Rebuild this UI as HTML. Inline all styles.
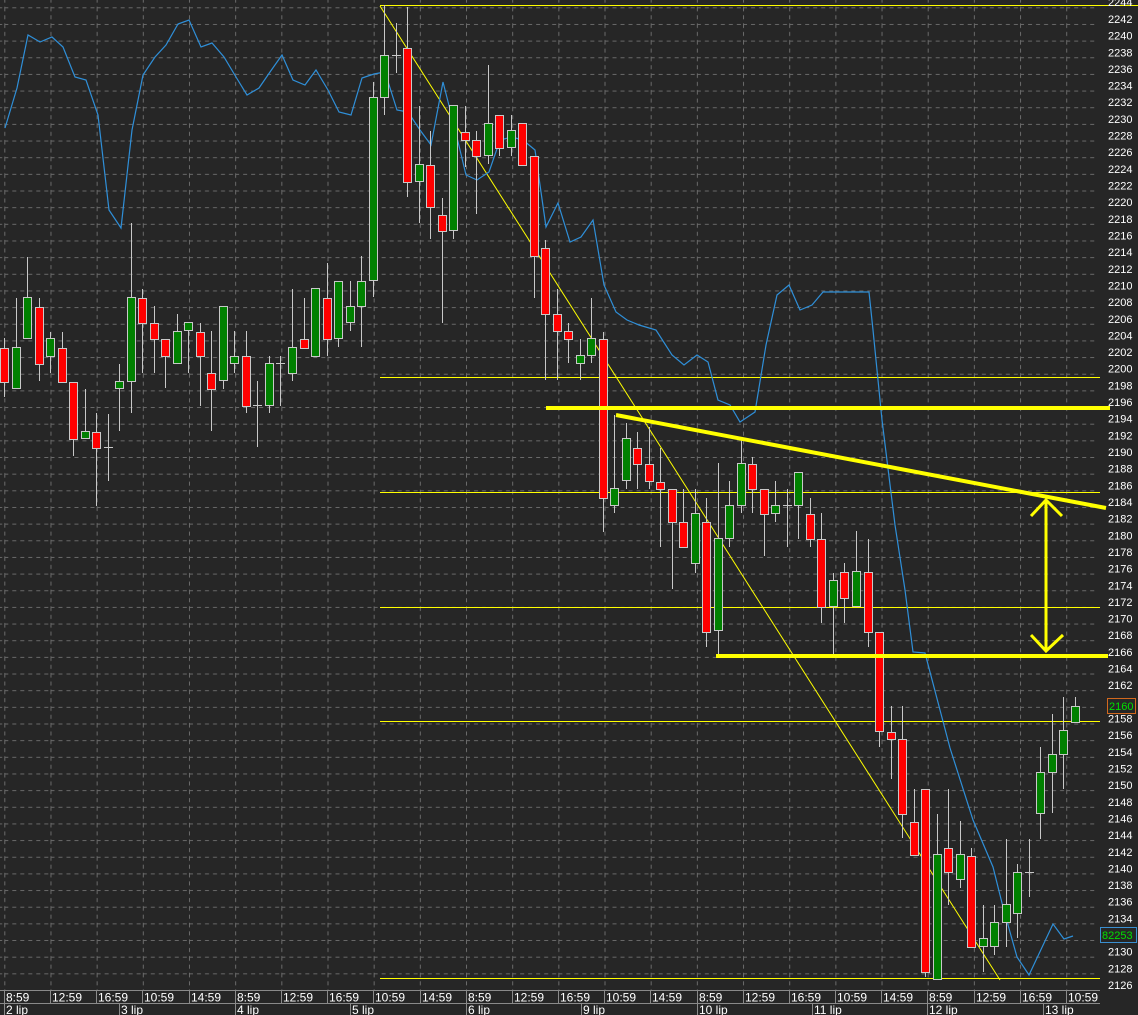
<!DOCTYPE html>
<html><head><meta charset="utf-8"><style>
html,body{margin:0;padding:0;background:#262626;}
svg{display:block;font-family:"Liberation Sans",sans-serif;}
.r{fill:#ff0000;stroke:#c8c8c8;stroke-width:1}
.g{fill:#008000;stroke:#c8c8c8;stroke-width:1}
.ax text{fill:#fff;font-size:11px}
.tx text{fill:#fff;font-size:12px}
</style></head><body>
<svg width="1138" height="1015" viewBox="0 0 1138 1015" xmlns="http://www.w3.org/2000/svg">
<defs>
<pattern id="gp" x="4.3" y="7.3" width="46.17" height="16.656" patternUnits="userSpaceOnUse">
<line x1="0" y1="0.5" x2="46.17" y2="0.5" stroke="#6a6a6a" stroke-dasharray="4,4"/>
<line x1="0.5" y1="0" x2="0.5" y2="16.656" stroke="#6a6a6a" stroke-dasharray="4,4"/>
</pattern>
</defs>
<rect width="1138" height="1015" fill="#262626"/>
<rect x="0" y="0" width="1098" height="990" fill="url(#gp)"/>

<!-- thin yellow lines -->
<g stroke="#ffff00" stroke-width="1" fill="none">
<line x1="380" y1="5.5" x2="1138" y2="5.5"/>
<line x1="380" y1="6" x2="1000" y2="980"/>
<line x1="380" y1="377.5" x2="1100" y2="377.5"/>
<line x1="380" y1="492.5" x2="1100" y2="492.5"/>
<line x1="380" y1="607.5" x2="1100" y2="607.5"/>
<line x1="380" y1="721.5" x2="1100" y2="721.5"/>
<line x1="380" y1="978.5" x2="1100" y2="978.5"/>
</g>

<!-- blue line -->
<polyline fill="none" stroke="#2f8fd8" stroke-width="1.2" points="5,128 17,88 28,35 40,42 52,37 63,47 75,77 86,80 98,115 109,210 121,228 132,130 143,75 155,57 166,45 178,24 189,20 201,47 212,43 224,57 236,77 247,95 259,88 270,72 282,55 293,80 305,85 316,70 328,90 339,112 351,115 362,78 374,74 385,72 397,110 408,112 420,130 431,145 443,82 454,125 466,175 477,180 489,172 500,140 512,137 523,140 535,150 546,227 558,203 570,242 581,237 593,220 604,285 616,312 627,320 639,325 656,330 672,355 684,365 697,355 708,362 718,400 730,405 740,422 755,412 766,345 777,295 789,285 800,310 812,305 823,292 846,292 869,292 873,330 882,420 895,525 905,590 913,652 925,653 950,748 973,820 993,867 1003,907 1017,957 1029,975 1053,924 1064,939 1073,936"/>

<!-- wicks -->
<path stroke="#c8c8c8" stroke-width="1" fill="none" d="M4.5 338V397M16.5 298V388M27.5 257V338M39.5 298V381M50.5 332V373M62.5 332V382M73.5 382V456M85.5 389V438M96.5 413V506M108.5 414V481M119.5 364V431M131.5 223V413M142.5 289V373M154.5 306V373M165.5 339V388M177.5 314V363M188.5 322V373M200.5 323V406M211.5 331V431M223.5 306V389M234.5 331V373M246.5 331V413M257.5 381V447M269.5 356V413M280.5 356V406M292.5 289V381M304.5 298V348M315.5 288V356M327.5 263V356M338.5 281V347M350.5 281V331M361.5 256V347M373.5 82V297M384.5 5V115M396.5 23V73M407.5 7V197M419.5 106V223M430.5 131V239M442.5 198V323M453.5 105V239M465.5 106V167M476.5 131V214M488.5 65V164M499.5 115V156M511.5 115V156M522.5 123V165M534.5 156V298M545.5 240V380M557.5 289V380M568.5 323V363M580.5 339V380M591.5 298V363M603.5 332V532M614.5 415V513M626.5 423V489M637.5 432V489M649.5 427V489M660.5 448V547M672.5 489V589M683.5 489V547M695.5 489V573M706.5 498V647M718.5 463V658M729.5 481V547M741.5 440V513M752.5 457V513M764.5 489V556M775.5 481V522M787.5 489V547M798.5 472V539M810.5 498V547M821.5 513V623M833.5 573V656M844.5 563V623M856.5 531V606M868.5 539V647M879.5 632V747M891.5 706V779M902.5 706V838M914.5 789V855M925.5 789V977M937.5 814V979M948.5 789V905M960.5 821V888M971.5 848V947M983.5 905V972M994.5 905V955M1006.5 839V947M1017.5 864V938M1029.5 839V897M1040.5 747V839M1052.5 714V813M1063.5 697V789M1075.5 697V722
M104 447.5H113M253 405.5H262M276 363.5H285M392 55.5H401M783 505.5H792M1025 872.5H1034"/>

<!-- bodies -->
<g>
<rect class="r" x="0.5" y="348.5" width="8" height="34"/>
<rect class="g" x="12.5" y="347.5" width="8" height="41"/>
<rect class="g" x="23.5" y="297.5" width="8" height="41"/>
<rect class="r" x="35.5" y="307.5" width="8" height="57"/>
<rect class="g" x="46.5" y="338.5" width="8" height="18"/>
<rect class="r" x="58.5" y="348.5" width="8" height="34"/>
<rect class="r" x="69.5" y="382.5" width="8" height="57"/>
<rect class="g" x="81.5" y="431.5" width="8" height="7"/>
<rect class="r" x="92.5" y="432.5" width="8" height="16"/>
<rect class="g" x="115.5" y="381.5" width="8" height="7"/>
<rect class="g" x="127.5" y="297.5" width="8" height="84"/>
<rect class="r" x="138.5" y="298.5" width="8" height="25"/>
<rect class="r" x="150.5" y="323.5" width="8" height="16"/>
<rect class="r" x="161.5" y="339.5" width="8" height="17"/>
<rect class="g" x="173.5" y="331.5" width="8" height="32"/>
<rect class="g" x="184.5" y="322.5" width="8" height="8"/>
<rect class="r" x="196.5" y="332.5" width="8" height="24"/>
<rect class="r" x="207.5" y="373.5" width="8" height="16"/>
<rect class="g" x="219.5" y="306.5" width="8" height="74"/>
<rect class="g" x="230.5" y="356.5" width="8" height="7"/>
<rect class="r" x="242.5" y="356.5" width="8" height="50"/>
<rect class="g" x="265.5" y="363.5" width="8" height="42"/>
<rect class="g" x="288.5" y="347.5" width="8" height="26"/>
<rect class="r" x="300.5" y="339.5" width="8" height="9"/>
<rect class="g" x="311.5" y="288.5" width="8" height="68"/>
<rect class="r" x="323.5" y="298.5" width="8" height="41"/>
<rect class="g" x="334.5" y="281.5" width="8" height="57"/>
<rect class="g" x="346.5" y="306.5" width="8" height="16"/>
<rect class="g" x="357.5" y="281.5" width="8" height="25"/>
<rect class="g" x="369.5" y="97.5" width="8" height="183"/>
<rect class="g" x="380.5" y="55.5" width="8" height="42"/>
<rect class="r" x="403.5" y="48.5" width="8" height="134"/>
<rect class="g" x="415.5" y="164.5" width="8" height="17"/>
<rect class="r" x="426.5" y="165.5" width="8" height="42"/>
<rect class="r" x="438.5" y="215.5" width="8" height="16"/>
<rect class="g" x="449.5" y="105.5" width="8" height="125"/>
<rect class="r" x="461.5" y="132.5" width="8" height="8"/>
<rect class="r" x="472.5" y="140.5" width="8" height="16"/>
<rect class="g" x="484.5" y="123.5" width="8" height="32"/>
<rect class="r" x="495.5" y="115.5" width="8" height="33"/>
<rect class="g" x="507.5" y="130.5" width="8" height="17"/>
<rect class="r" x="518.5" y="123.5" width="8" height="42"/>
<rect class="r" x="530.5" y="156.5" width="8" height="100"/>
<rect class="r" x="541.5" y="248.5" width="8" height="66"/>
<rect class="r" x="553.5" y="314.5" width="8" height="17"/>
<rect class="r" x="564.5" y="331.5" width="8" height="8"/>
<rect class="g" x="576.5" y="355.5" width="8" height="8"/>
<rect class="g" x="587.5" y="338.5" width="8" height="17"/>
<rect class="r" x="599.5" y="339.5" width="8" height="159"/>
<rect class="g" x="610.5" y="488.5" width="8" height="17"/>
<rect class="g" x="622.5" y="438.5" width="8" height="42"/>
<rect class="r" x="633.5" y="448.5" width="8" height="16"/>
<rect class="r" x="645.5" y="464.5" width="8" height="17"/>
<rect class="r" x="656.5" y="482.5" width="8" height="7"/>
<rect class="r" x="668.5" y="489.5" width="8" height="33"/>
<rect class="r" x="679.5" y="522.5" width="8" height="25"/>
<rect class="g" x="691.5" y="513.5" width="8" height="50"/>
<rect class="r" x="702.5" y="522.5" width="8" height="110"/>
<rect class="g" x="714.5" y="538.5" width="8" height="92"/>
<rect class="g" x="725.5" y="505.5" width="8" height="33"/>
<rect class="g" x="737.5" y="463.5" width="8" height="42"/>
<rect class="r" x="748.5" y="464.5" width="8" height="25"/>
<rect class="r" x="760.5" y="489.5" width="8" height="25"/>
<rect class="g" x="771.5" y="505.5" width="8" height="8"/>
<rect class="g" x="794.5" y="472.5" width="8" height="33"/>
<rect class="r" x="806.5" y="514.5" width="8" height="25"/>
<rect class="r" x="817.5" y="539.5" width="8" height="68"/>
<rect class="g" x="829.5" y="580.5" width="8" height="26"/>
<rect class="r" x="840.5" y="572.5" width="8" height="26"/>
<rect class="g" x="852.5" y="571.5" width="8" height="35"/>
<rect class="r" x="864.5" y="572.5" width="8" height="60"/>
<rect class="r" x="875.5" y="632.5" width="8" height="99"/>
<rect class="r" x="887.5" y="732.5" width="8" height="7"/>
<rect class="r" x="898.5" y="739.5" width="8" height="75"/>
<rect class="r" x="910.5" y="822.5" width="8" height="33"/>
<rect class="r" x="921.5" y="789.5" width="8" height="183"/>
<rect class="g" x="933.5" y="854.5" width="8" height="125"/>
<rect class="r" x="944.5" y="848.5" width="8" height="24"/>
<rect class="g" x="956.5" y="854.5" width="8" height="25"/>
<rect class="r" x="967.5" y="856.5" width="8" height="91"/>
<rect class="g" x="979.5" y="938.5" width="8" height="8"/>
<rect class="g" x="990.5" y="922.5" width="8" height="24"/>
<rect class="g" x="1002.5" y="904.5" width="8" height="18"/>
<rect class="g" x="1013.5" y="872.5" width="8" height="41"/>
<rect class="g" x="1036.5" y="772.5" width="8" height="41"/>
<rect class="g" x="1048.5" y="754.5" width="8" height="18"/>
<rect class="g" x="1059.5" y="730.5" width="8" height="24"/>
<rect class="g" x="1071.5" y="706.5" width="8" height="16"/>
</g>

<!-- thick yellow -->
<g stroke="#ffff00" stroke-width="4" fill="none" stroke-linecap="butt">
<line x1="546" y1="408" x2="1110" y2="408"/>
<line x1="616" y1="415" x2="1106" y2="508"/>
<line x1="716" y1="656" x2="1108" y2="656"/>
</g>
<g stroke="#ffff00" stroke-width="3" fill="none">
<line x1="1046" y1="500" x2="1046" y2="650"/>
<polyline points="1031,516 1046,500 1062,516"/>
<polyline points="1031,635 1046,651 1063,635"/>
</g>

<!-- right axis labels -->
<g class="ax">
<text x="1108" y="6">2244</text>
<text x="1108" y="23">2242</text><text x="1108" y="39.6">2240</text><text x="1108" y="56.3">2238</text><text x="1108" y="72.9">2236</text><text x="1108" y="89.6">2234</text><text x="1108" y="106.2">2232</text><text x="1108" y="122.9">2230</text><text x="1108" y="139.5">2228</text><text x="1108" y="156.2">2226</text><text x="1108" y="172.9">2224</text><text x="1108" y="189.5">2222</text><text x="1108" y="206.2">2220</text><text x="1108" y="222.8">2218</text><text x="1108" y="239.5">2216</text><text x="1108" y="256.1">2214</text><text x="1108" y="272.8">2212</text><text x="1108" y="289.5">2210</text><text x="1108" y="306.1">2208</text><text x="1108" y="322.8">2206</text><text x="1108" y="339.4">2204</text><text x="1108" y="356.1">2202</text><text x="1108" y="372.7">2200</text><text x="1108" y="389.4">2198</text><text x="1108" y="406">2196</text><text x="1108" y="422.7">2194</text><text x="1108" y="439.4">2192</text><text x="1108" y="456">2190</text><text x="1108" y="472.7">2188</text><text x="1108" y="489.3">2186</text><text x="1108" y="506">2184</text><text x="1108" y="522.6">2182</text><text x="1108" y="539.3">2180</text><text x="1108" y="556">2178</text><text x="1108" y="572.6">2176</text><text x="1108" y="589.3">2174</text><text x="1108" y="605.9">2172</text><text x="1108" y="622.6">2170</text><text x="1108" y="639.2">2168</text><text x="1108" y="655.9">2166</text><text x="1108" y="672.5">2164</text><text x="1108" y="689.2">2162</text><text x="1108" y="722.5">2158</text><text x="1108" y="739.2">2156</text><text x="1108" y="755.8">2154</text><text x="1108" y="772.5">2152</text><text x="1108" y="789.1">2150</text><text x="1108" y="805.8">2148</text><text x="1108" y="822.5">2146</text><text x="1108" y="839.1">2144</text><text x="1108" y="855.8">2142</text><text x="1108" y="872.4">2140</text><text x="1108" y="889.1">2138</text><text x="1108" y="905.7">2136</text><text x="1108" y="922.4">2134</text><text x="1108" y="955.7">2130</text><text x="1108" y="972.3">2128</text><text x="1108" y="989">2126</text>
</g>
<rect x="1107.5" y="698.5" width="28" height="15" fill="#262626" stroke="#d2691e"/>
<text x="1109" y="710" fill="#00e000" font-size="11px">2160</text>
<rect x="1100.5" y="927.5" width="36" height="15" fill="#262626" stroke="#3a8fd0"/>
<text x="1102" y="939" fill="#00e000" font-size="11px">82253</text>

<!-- bottom axis -->
<rect x="0" y="990" width="1138" height="25" fill="#262626"/>
<g stroke="#8a8a8a" stroke-width="1" fill="none">
<line x1="0" y1="990.5" x2="1100" y2="990.5"/>
<line x1="0" y1="1003.5" x2="1100" y2="1003.5"/>
<path d="M4.5 991V1003M50.5 991V1003M96.5 991V1003M142.5 991V1003M189.5 991V1003M235.5 991V1003M281.5 991V1003M327.5 991V1003M373.5 991V1003M420.5 991V1003M466.5 991V1003M512.5 991V1003M558.5 991V1003M604.5 991V1003M650.5 991V1003M697.5 991V1003M743.5 991V1003M789.5 991V1003M835.5 991V1003M881.5 991V1003M927.5 991V1003M974.5 991V1003M1020.5 991V1003M1066.5 991V1003
M4.5 1004V1015M119.5 1004V1015M235.5 1004V1015M350.5 1004V1015M466.5 1004V1015M581.5 1004V1015M697.5 1004V1015M812.5 1004V1015M927.5 1004V1015M1043.5 1004V1015"/>
</g>
<g class="tx">
<text x="6" y="1001.5">8:59</text><text x="52" y="1001.5">12:59</text><text x="98" y="1001.5">16:59</text><text x="144" y="1001.5">10:59</text><text x="191" y="1001.5">14:59</text><text x="237" y="1001.5">8:59</text><text x="283" y="1001.5">12:59</text><text x="329" y="1001.5">16:59</text><text x="375" y="1001.5">10:59</text><text x="422" y="1001.5">14:59</text><text x="468" y="1001.5">8:59</text><text x="514" y="1001.5">12:59</text><text x="560" y="1001.5">16:59</text><text x="606" y="1001.5">10:59</text><text x="652" y="1001.5">14:59</text><text x="699" y="1001.5">8:59</text><text x="745" y="1001.5">12:59</text><text x="791" y="1001.5">16:59</text><text x="837" y="1001.5">10:59</text><text x="883" y="1001.5">14:59</text><text x="929" y="1001.5">8:59</text><text x="976" y="1001.5">12:59</text><text x="1022" y="1001.5">16:59</text><text x="1068" y="1001.5">10:59</text>
<text x="6" y="1014">2 lip</text><text x="121" y="1014">3 lip</text><text x="237" y="1014">4 lip</text><text x="352" y="1014">5 lip</text><text x="468" y="1014">6 lip</text><text x="583" y="1014">9 lip</text><text x="699" y="1014">10 lip</text><text x="814" y="1014">11 lip</text><text x="929" y="1014">12 lip</text><text x="1045" y="1014">13 lip</text>
</g>
</svg>
</body></html>
